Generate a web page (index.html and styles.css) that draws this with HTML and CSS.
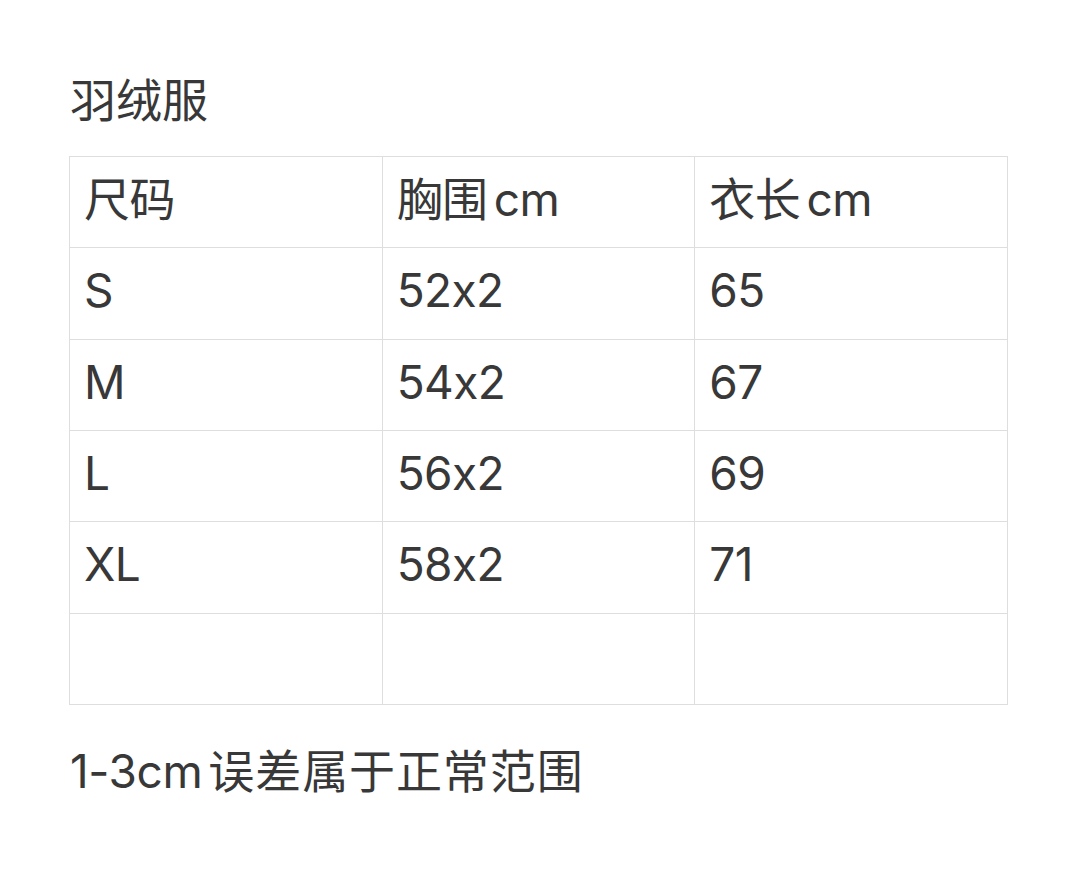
FILE: index.html
```html
<!DOCTYPE html>
<html lang="zh">
<head>
<meta charset="utf-8">
<link rel="stylesheet" href="styles.css">
</head>
<body>
<div class="page">
  <h1 class="title">羽绒服</h1>
  <table class="size-table">
    <tr><td>尺码</td><td class="head">胸围 cm</td><td class="head">衣长 cm</td></tr>
    <tr><td>S</td><td>52x2</td><td>65</td></tr>
    <tr><td>M</td><td>54x2</td><td>67</td></tr>
    <tr><td>L</td><td>56x2</td><td>69</td></tr>
    <tr><td>XL</td><td>58x2</td><td>71</td></tr>
    <tr><td></td><td></td><td></td></tr>
  </table>
  <p class="note"><span class="latin">1-3cm</span><span class="cjk">误差属于正常范围</span></p>
</div>
</body>
</html>
```
FILE: styles.css
```css
html, body {
  margin: 0;
  padding: 0;
  background: #ffffff;
}
.page {
  padding: 68px 0 0 69px;
  font-family: Inter, "Noto Sans CJK SC", sans-serif;
  font-feature-settings: "calt" 0;
  color: #383838;
  font-size: 46px;
}
.title {
  margin: 0 0 24px 1px;
  font-size: 46px;
  font-weight: 400;
  line-height: 64px;
  height: 64px;
}
.size-table {
  border-collapse: collapse;
  width: 939px;
  table-layout: fixed;
  border: 1px solid #cccccc;
}
.size-table td {
  height: 91.33px;
  padding: 0 0 6px 14px;
  border: 1px solid #dedede;
  vertical-align: middle;
  line-height: 1;
  box-sizing: border-box;
  letter-spacing: -0.6px;
}
.size-table td.head {
  word-spacing: -6px;
}
.note {
  margin: 34px 0 0 1px;
  line-height: 64px;
  font-size: 46px;
}
.note .latin {
  letter-spacing: -0.4px;
  margin-right: 6px;
}
.note .cjk {
  letter-spacing: 0.9px;
}
```
